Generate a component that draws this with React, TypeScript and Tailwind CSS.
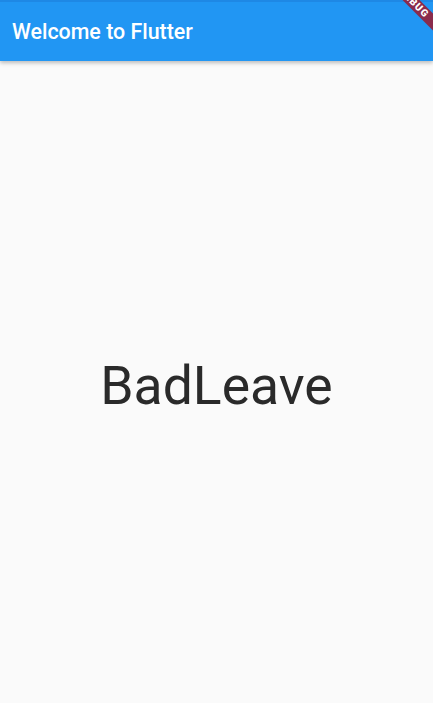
export default function App() {
  return (
    <div
      className="relative flex h-[703px] w-[433px] flex-col overflow-hidden bg-[#fafafa]"
      style={{ fontFamily: 'Roboto, "Noto Sans", sans-serif' }}
    >
      <header className="relative z-10 flex h-[61px] items-center border-t-2 border-[#1e88e5] bg-[#2196f3] px-3 shadow-[0_2px_4px_rgba(0,0,0,0.25)]">
        <h1 className="text-[21.4px] font-medium leading-none text-white">Welcome to Flutter</h1>
      </header>
      <main className="flex flex-1 items-center justify-center pt-2">
        <span className="text-[53.5px] font-normal leading-none text-[#2a2a2a]">BadLeave</span>
      </main>
      {/* debug banner */}
      <div className="pointer-events-none absolute left-[374px] top-[-3px] z-20 flex h-[12px] w-[80px] rotate-45 items-center justify-center bg-[#8a2b4c]">
        <span className="text-[10px] font-black leading-none tracking-[1px] text-white">DEBUG</span>
      </div>
    </div>
  )
}
